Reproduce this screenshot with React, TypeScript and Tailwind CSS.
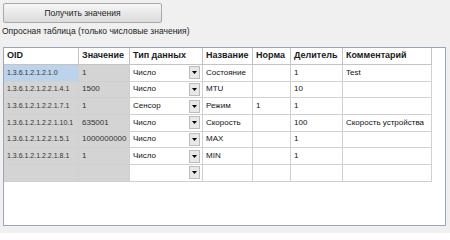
import React from 'react';

// read-only columns (OID, value) are grey, the rest editable
type Row = {
  oid: string;
  value: string;
  type: string;
  name: string;
  norm: string;
  divider: string;
  comment: string;
};

const rows: Row[] = [
  { oid: '1.3.6.1.2.1.2.1.0', value: '1', type: 'Число', name: 'Состояние', norm: '', divider: '1', comment: 'Test' },
  { oid: '1.3.6.1.2.1.2.2.1.4.1', value: '1500', type: 'Число', name: 'MTU', norm: '', divider: '10', comment: '' },
  { oid: '1.3.6.1.2.1.2.2.1.7.1', value: '1', type: 'Сенсор', name: 'Режим', norm: '1', divider: '1', comment: '' },
  { oid: '1.3.6.1.2.1.2.2.1.10.1', value: '635001', type: 'Число', name: 'Скорость', norm: '', divider: '100', comment: 'Скорость устройства' },
  { oid: '1.3.6.1.2.1.2.2.1.5.1', value: '1000000000', type: 'Число', name: 'MAX', norm: '', divider: '1', comment: '' },
  { oid: '1.3.6.1.2.1.2.2.1.8.1', value: '1', type: 'Число', name: 'MIN', norm: '', divider: '1', comment: '' },
  { oid: '', value: '', type: '', name: '', norm: '', divider: '', comment: '' },
];

const headers = ['OID', 'Значение', 'Тип данных', 'Название', 'Норма', 'Делитель', 'Комментарий'];

const cell = 'h-[16.67px] border-r border-b border-[#d0d0d0] px-[3px] flex items-center truncate';

const ComboCell: React.FC<{ text: string }> = ({ text }) => (
  <div className="h-[16.67px] border-r border-b border-[#d0d0d0] bg-white flex items-center pl-[3px] pr-[2px]">
    <span className="flex-1 truncate">{text}</span>
    <span className="w-[11px] h-[13px] bg-[#e8e8e8] border border-[#bcbcbc] flex items-center justify-center">
      <svg width="5" height="3" viewBox="0 0 5 3">
        <path d="M0 0h5L2.5 3z" fill="#000" />
      </svg>
    </span>
  </div>
);

export default function App() {
  return (
    <div className="w-[450px] h-[233px] bg-[#f0f0f0] pt-[3px] pl-[3px] text-[8px] text-[#111] [font-family:'Liberation_Sans',Arial,sans-serif] overflow-hidden">
      <button className="w-[159px] h-[20px] border border-[#a9a9a9] rounded-[2px] bg-gradient-to-b from-[#f6f6f6] to-[#dcdcdc] text-[8.5px] text-[#222]">
        Получить значения
      </button>
      <div className="h-[16px] flex items-center -ml-[1px] text-[8.5px] text-[#222]">
        Опросная таблица (только числовые значения)
      </div>

      <div className="mt-[8px] w-[443px] h-[179px] border border-[#9aa6b6] bg-white overflow-hidden">
        <div className="grid grid-cols-[75px_51px_73px_50px_38px_52px_89px]">
          {headers.map((h) => (
            <div
              key={h}
              className="h-[17px] border-r border-b border-[#c4c4c4] bg-white px-[3px] flex items-center font-bold text-[9px] text-[#1a1a1a]"
            >
              {h}
            </div>
          ))}

          {rows.map((r, i) => (
            <React.Fragment key={i}>
              <div className={`${cell} ${i === 0 ? 'bg-[#bcd3ec]' : 'bg-[#d4d4d4]'} text-[7px] text-[#333]`}>{r.oid}</div>
              <div className={`${cell} bg-[#d4d4d4] text-[#333]`}>{r.value}</div>
              <ComboCell text={r.type} />
              <div className={`${cell} bg-white`}>{r.name}</div>
              <div className={`${cell} bg-white`}>{r.norm}</div>
              <div className={`${cell} bg-white`}>{r.divider}</div>
              <div className={`${cell} bg-white`}>{r.comment}</div>
            </React.Fragment>
          ))}
        </div>
      </div>
    </div>
  );
}
